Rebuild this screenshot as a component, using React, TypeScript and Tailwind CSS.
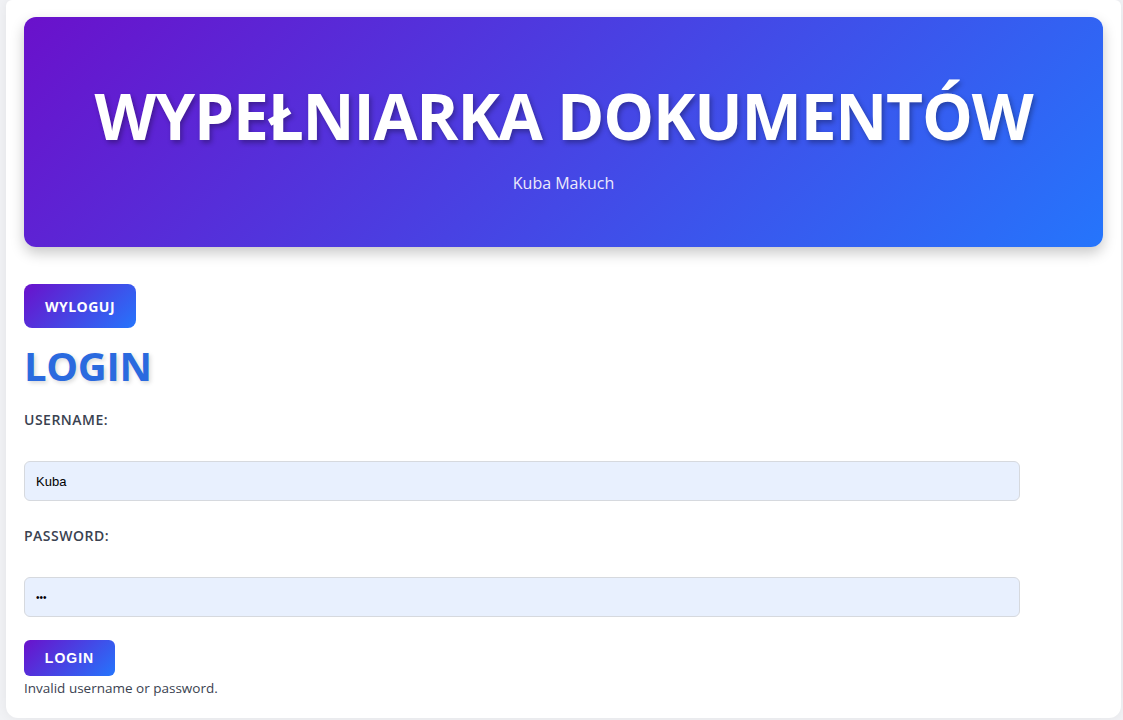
export default function App() {
  return (
    <div className="min-h-screen bg-[#f1f2f5] pl-[6px] pr-[2px] pb-[3px] font-['Open_Sans',sans-serif]">
      <div className="rounded-b-xl rounded-t-md bg-white px-[18px] pt-[17px] pb-[20px] shadow-[0_0_12px_rgba(0,0,0,0.06)]">
        {/* Header */}
        <header className="flex h-[230px] flex-col items-center justify-center rounded-xl bg-[linear-gradient(135deg,#6a11cb,#2575fc)] shadow-[0_6px_14px_rgba(0,0,0,0.22)]">
          <h1 className="mt-[14px] text-[64px] font-bold leading-none tracking-[-1.2px] text-white [text-shadow:2px_3px_5px_rgba(0,0,0,0.3)]">
            WYPEŁNIARKA DOKUMENTÓW
          </h1>
          <p className="mt-[23px] text-[16px] text-[#ece9fb]">Kuba Makuch</p>
        </header>

        <button className="mt-[37px] block h-[44px] w-[112px] rounded-lg bg-[linear-gradient(135deg,#6a11cb,#2575fc)] text-[14px] font-bold tracking-[0.5px] text-white">
          WYLOGUJ
        </button>

        <h2 className="mt-[15px] text-[40px] font-bold leading-[46px] tracking-[-0.3px] text-[#2a6adf] [text-shadow:2px_2px_4px_rgba(0,0,0,0.15)]">
          LOGIN
        </h2>

        <form className="w-[996px]">
          <label className="mt-[21px] block text-[14px] font-semibold leading-[20px] tracking-[0.5px] text-[#3a4250]">
            USERNAME:
          </label>
          <input
            defaultValue="Kuba"
            className="mt-[31px] block h-[40px] w-full rounded-md border border-[#d6d9de] bg-[#e8f0fe] px-[11px] font-['Liberation_Sans',sans-serif] text-[13px] text-black outline-none"
          />
          <label className="mt-[25px] block text-[14px] font-semibold leading-[20px] tracking-[0.5px] text-[#3a4250]">
            PASSWORD:
          </label>
          <input
            type="password"
            defaultValue="abc"
            className="mt-[31px] block h-[40px] w-full rounded-md border border-[#d6d9de] bg-[#e8f0fe] px-[11px] font-['Liberation_Sans',sans-serif] text-[10px] text-black outline-none"
          />
          <button
            type="button"
            className="mt-[23px] block h-[36px] w-[91px] rounded-md bg-[linear-gradient(135deg,#6a11cb,#2575fc)] font-['Liberation_Sans',sans-serif] text-[14px] font-bold tracking-[1px] text-white"
          >
            LOGIN
          </button>
        </form>
        <p className="mt-[2px] text-[13.5px] leading-[20px] text-[#3a4250]">Invalid username or password.</p>
      </div>
    </div>
  );
}
